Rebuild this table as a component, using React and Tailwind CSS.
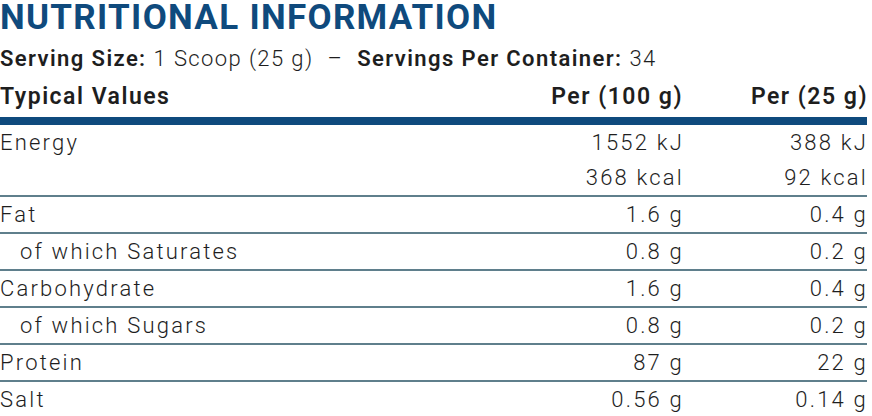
const rows = [
  { label: 'Energy', per100: ['1552 kJ', '368 kcal'], per25: ['388 kJ', '92 kcal'] },
  { label: 'Fat', per100: ['1.6 g'], per25: ['0.4 g'] },
  { label: 'of which Saturates', sub: true, per100: ['0.8 g'], per25: ['0.2 g'] },
  { label: 'Carbohydrate', per100: ['1.6 g'], per25: ['0.4 g'] },
  { label: 'of which Sugars', sub: true, per100: ['0.8 g'], per25: ['0.2 g'] },
  { label: 'Protein', per100: ['87 g'], per25: ['22 g'] },
  { label: 'Salt', per100: ['0.56 g'], per25: ['0.14 g'], last: true },
]

export default function App() {
  return (
    <div
      className="w-[872px] h-[416px] overflow-hidden bg-white text-[#1e1e1e]"
      style={{ fontFamily: 'Roboto, "Liberation Sans", sans-serif' }}
    >
      <div className="w-[867px]">
        <h1 className="h-[38px] pt-[1px] text-[35px] leading-[34px] font-bold text-[#0f4a7d] tracking-[1.3px] whitespace-nowrap">
          NUTRITIONAL INFORMATION
        </h1>
        <p className="h-[40px] flex items-center text-[22px] tracking-[1.4px] whitespace-nowrap">
          <span className="font-semibold">Serving Size:</span>
          <span className="ml-[7px] font-light">1 Scoop (25 g)</span>
          <span className="mx-[14px] font-light">–</span>
          <span className="font-semibold">Servings Per Container:</span>
          <span className="ml-[7px] font-light">34</span>
        </p>
        <div className="h-[39px] flex items-center text-[23px] font-semibold tracking-[1.5px]">
          <div className="flex-1">Typical Values</div>
          <div className="w-[185px] text-right">Per (100 g)</div>
          <div className="w-[185px] text-right -mr-[1px]">Per (25 g)</div>
        </div>
        <div className="h-[8px] bg-[#0f4a7d]" />
        {rows.map((r) => (
          <div
            key={r.label}
            className={`flex text-[22px] font-light leading-[35px] tracking-[2.2px] ${
              r.last ? '' : 'border-b-2 border-[#5f7f8c]'
            }`}
          >
            <div className={`flex-1 ${r.sub ? 'pl-[20px]' : ''}`}>{r.label}</div>
            <div className="w-[185px] text-right -mr-[1px]">
              {r.per100.map((v) => (
                <div key={v}>{v}</div>
              ))}
            </div>
            <div className="w-[185px] text-right -mr-[1px]">
              {r.per25.map((v) => (
                <div key={v}>{v}</div>
              ))}
            </div>
          </div>
        ))}
      </div>
    </div>
  )
}
